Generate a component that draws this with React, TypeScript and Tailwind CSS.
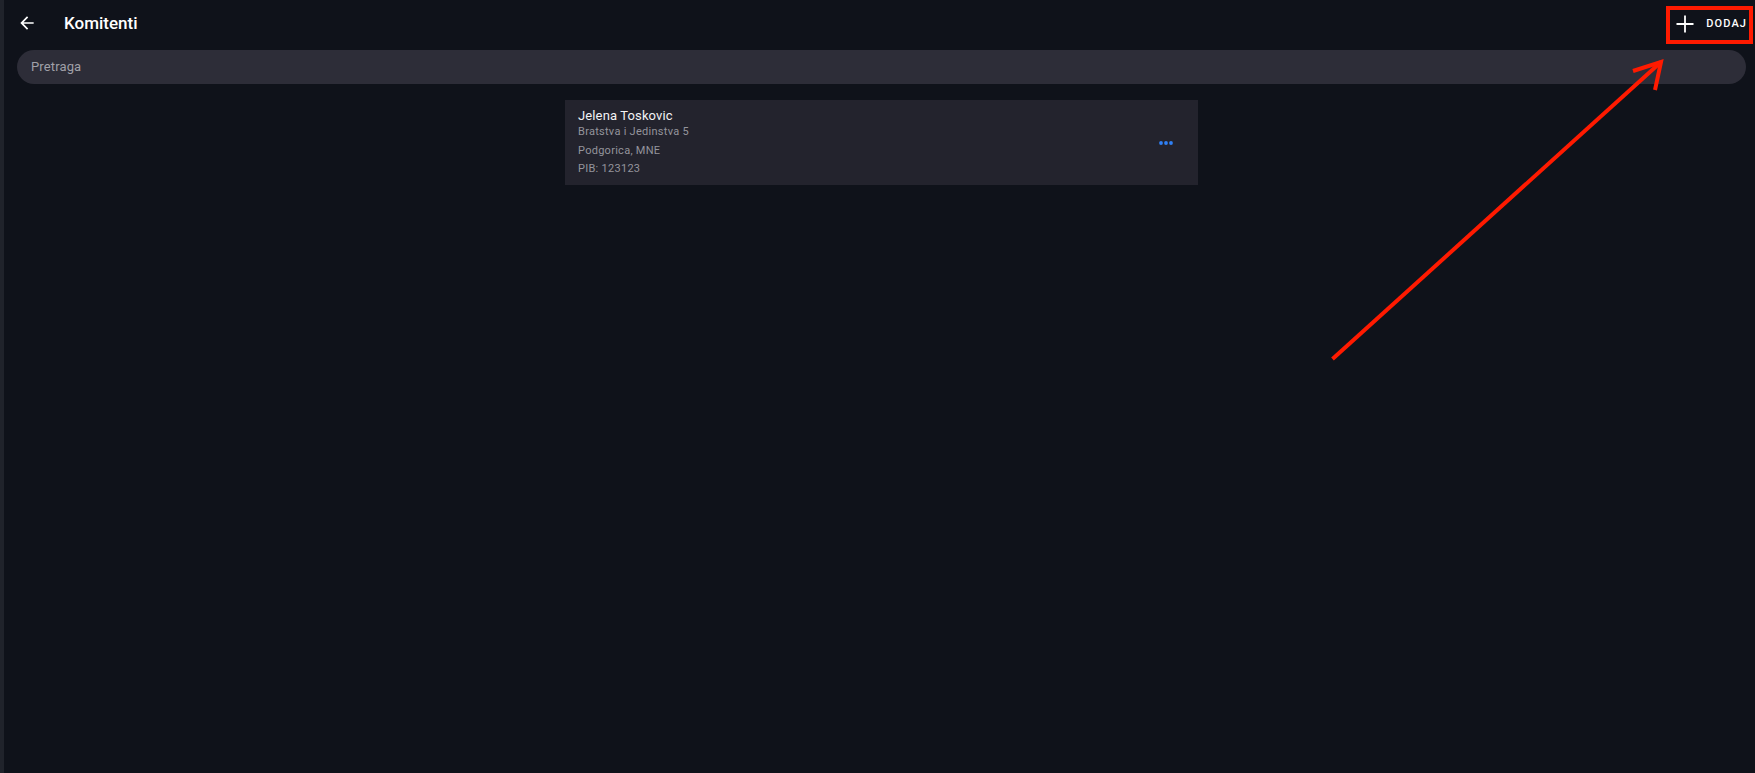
interface Client {
  name: string
  address: string
  city: string
  pib: string
}

const CLIENTS: Client[] = [
  { name: 'Jelena Toskovic', address: 'Bratstva i Jedinstva 5', city: 'Podgorica, MNE', pib: '123123' },
]

function BackIcon() {
  return (
    <svg width="20" height="20" viewBox="0 0 24 24" fill="currentColor" aria-hidden="true">
      <path d="M20 11H7.83l5.59-5.59L12 4l-8 8 8 8 1.41-1.41L7.83 13H20v-2z" />
    </svg>
  )
}

function PlusIcon() {
  return (
    <svg width="18" height="18" viewBox="0 0 18 18" fill="none" stroke="currentColor" strokeWidth="1.8" aria-hidden="true">
      <path d="M9 .5v17M.5 9h17" />
    </svg>
  )
}

function MoreIcon() {
  return (
    <svg width="14" height="4" viewBox="0 0 14 4" fill="currentColor" aria-hidden="true">
      <circle cx="2" cy="2" r="1.9" />
      <circle cx="7" cy="2" r="1.9" />
      <circle cx="12" cy="2" r="1.9" />
    </svg>
  )
}

// Hint arrow that points at the add button, anchored to the right edge.
function HintArrow() {
  return (
    <svg
      className="pointer-events-none absolute right-0 top-0"
      width="440"
      height="370"
      viewBox="0 0 440 370"
      fill="none"
      stroke="#ff1a00"
      strokeWidth="4"
      aria-hidden="true"
    >
      <path d="M17.5 359L346 62" />
      <path d="M318 71L346 62L340 90" />
    </svg>
  )
}

function ClientCard({ client }: { client: Client }) {
  return (
    <li className="flex items-center justify-between bg-[#23232d] pb-[7px] pl-[13px] pr-[25px] pt-2">
      <div className="text-[11px] leading-[18px] tracking-wide text-[#94949c]">
        <h2 className="text-[13px] leading-[15px] tracking-[0.01em] text-[#f2f2f4]">{client.name}</h2>
        <p className="mb-px">{client.address}</p>
        <p>{client.city}</p>
        <p>PIB: {client.pib}</p>
      </div>
      <button type="button" aria-label="Opcije" className="text-[#2f80f5]">
        <MoreIcon />
      </button>
    </li>
  )
}

export default function App() {
  return (
    <div className="relative min-h-screen border-l-4 border-[#20232b] bg-[#0f121a] font-[Roboto,sans-serif] text-white">
      <header className="flex h-[50px] items-center pl-[13px] pr-0.5">
        <button type="button" aria-label="Nazad" className="pb-1">
          <BackIcon />
        </button>
        <h1 className="ml-[27px] pb-1 text-[17px] font-medium leading-[22px]">Komitenti</h1>
        <button
          type="button"
          className="ml-auto flex h-[38px] items-center gap-3 border-4 border-[#ff1a00] pb-0.5 pl-1.5 pr-0.5 text-[11px] font-medium leading-4 tracking-widest"
        >
          <PlusIcon />
          DODAJ
        </button>
      </header>

      <main className="pl-[13px] pr-[9px]">
        <input
          type="search"
          aria-label="Pretraga"
          placeholder="Pretraga"
          className="block h-[34px] w-full rounded-full bg-[#2d2d38] px-3.5 pb-0.5 text-[13px] tracking-[0.01em] outline-none placeholder:text-[#a0a0a8]"
        />
        <ul className="mx-auto mt-4 max-w-[633px]">
          {CLIENTS.map((client) => (
            <ClientCard key={client.pib} client={client} />
          ))}
        </ul>
      </main>

      <HintArrow />
    </div>
  )
}
